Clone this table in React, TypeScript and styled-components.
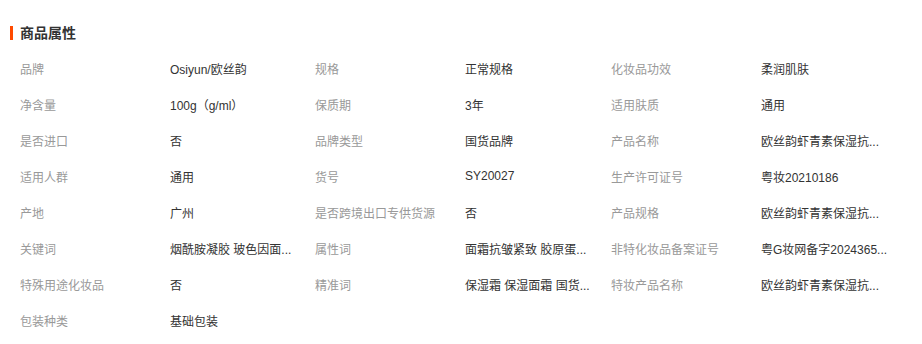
import React from "react";
import styled, { createGlobalStyle } from "styled-components";

const Global = createGlobalStyle`
  html, body { margin: 0; padding: 0; background: #fff; }
  body { font-family: "Liberation Sans", "Noto Sans CJK SC", sans-serif; }
`;

const Section = styled.section`
  width: 922px;
  padding-top: 23px;
  box-sizing: border-box;
`;

const Title = styled.h2`
  margin: 0 0 7px 10px;
  display: flex;
  align-items: center;
  gap: 7px;
  font-size: 14px;
  line-height: 20px;
  font-weight: 700;
  color: #333;
`;

const Bar = styled.span`
  width: 3px;
  height: 14px;
  background: #ff4a00;
`;

const Grid = styled.div`
  display: grid;
  grid-template-columns: 150px 145px 150px 146px 150px 146px;
  grid-auto-rows: 36px;
  padding-left: 20px;
  font-size: 12px;
`;

const Label = styled.div`
  color: #999;
  display: flex;
  align-items: center;
  white-space: nowrap;
`;

const Value = styled.div`
  color: #333;
  display: flex;
  align-items: center;
  white-space: nowrap;
`;

const items: [string, string][] = [
  ["品牌", "Osiyun/欧丝韵"],
  ["规格", "正常规格"],
  ["化妆品功效", "柔润肌肤"],
  ["净含量", "100g（g/ml）"],
  ["保质期", "3年"],
  ["适用肤质", "通用"],
  ["是否进口", "否"],
  ["品牌类型", "国货品牌"],
  ["产品名称", "欧丝韵虾青素保湿抗..."],
  ["适用人群", "通用"],
  ["货号", "SY20027"],
  ["生产许可证号", "粤妆20210186"],
  ["产地", "广州"],
  ["是否跨境出口专供货源", "否"],
  ["产品规格", "欧丝韵虾青素保湿抗..."],
  ["关键词", "烟酰胺凝胶 玻色因面..."],
  ["属性词", "面霜抗皱紧致 胶原蛋..."],
  ["非特化妆品备案证号", "粤G妆网备字2024365..."],
  ["特殊用途化妆品", "否"],
  ["精准词", "保湿霜 保湿面霜 国货..."],
  ["特妆产品名称", "欧丝韵虾青素保湿抗..."],
  ["包装种类", "基础包装"],
];

export default function App() {
  return (
    <>
      <Global />
      <Section>
        <Title>
          <Bar />
          商品属性
        </Title>
        <Grid>
          {items.map(([k, v]) => (
            <React.Fragment key={k}>
              <Label>{k}</Label>
              <Value>{v}</Value>
            </React.Fragment>
          ))}
        </Grid>
      </Section>
    </>
  );
}
